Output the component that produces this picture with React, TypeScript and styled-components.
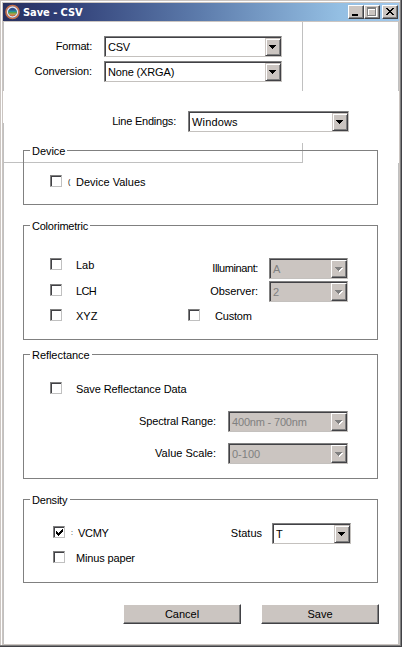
import React from "react";
import styled, { createGlobalStyle, css } from "styled-components";

const face = "#cbc5c1";
const dark = "#414145";
const mid = "#808080";
const line = "#c0c0c0";

const Global = createGlobalStyle`
  * { box-sizing: border-box; }
  html, body { margin: 0; padding: 0; background: #fff; }
  body {
    font-family: "Liberation Sans", Arial, sans-serif;
    font-size: 11px;
    line-height: 12px;
    color: #000;
    overflow: hidden;
  }
`;

const Frame = styled.div`
  width: 402px;
  height: 647px;
  background: ${face};
  padding: 1px 2px 2px 1px;
  box-shadow: inset -1px -1px 0 ${dark}, inset -2px -2px 0 ${mid};
`;

const FrameInner = styled.div`
  height: 100%;
  padding: 1px 1px 2px 1px;
  border-top: 1px solid #fff;
  border-left: 1px solid #fff;
`;

const TitleBar = styled.header`
  display: flex;
  align-items: center;
  height: 18px;
  padding: 0 1px 0 2px;
  background: linear-gradient(to right, #28315f 0, #2f3d75 14%, #5d7cac 50%, #94bfe3 85%, #a0c8ec 100%);
`;

const Title = styled.h1`
  flex: 1;
  margin: 2px 0 0 3px;
  font: bold 11px/14px "DejaVu Sans Condensed", "DejaVu Sans", sans-serif;
  font-stretch: condensed;
  letter-spacing: -0.05px;
  color: #fff;
  white-space: nowrap;
`;

const TitleButton = styled.button<{ $gap?: number }>`
  width: 16px;
  height: 14px;
  margin: 0 0 0 ${(p) => p.$gap ?? 0}px;
  padding: 0;
  border: 1px solid;
  border-color: #fff ${dark} ${dark} #fff;
  box-shadow: inset -1px -1px 0 ${mid};
  background: ${face};
  svg { display: block; }
`;

const Body = styled.main`
  position: relative;
  height: 622px;
  margin-top: 1px;
  padding-top: 14px;
  background: #fff;
`;

/* Thin pane edges that run beneath the groups */
const Edge = styled.i<{ $x: number; $y: number; $w?: number; $h?: number }>`
  position: absolute;
  left: ${(p) => p.$x}px;
  top: ${(p) => p.$y}px;
  width: ${(p) => p.$w ?? 1}px;
  height: ${(p) => p.$h ?? 1}px;
  background: ${line};
`;

const Field = styled.label<{ $width: number; $top?: number; $gap?: number }>`
  position: relative;
  display: flex;
  justify-content: flex-end;
  gap: ${(p) => p.$gap ?? 12}px;
  width: ${(p) => p.$width}px;
  margin-top: ${(p) => p.$top ?? 0}px;
`;

const Text = styled.span<{ $spacing?: number }>`
  white-space: nowrap;
  letter-spacing: ${(p) => p.$spacing ?? 0}px;
`;

const FieldText = styled(Text)`
  padding-top: 4px;
`;

const Combo = styled.span<{ $width: number; $disabled?: boolean }>`
  display: flex;
  justify-content: space-between;
  flex: none;
  width: ${(p) => p.$width}px;
  height: 21px;
  border: 1px solid;
  border-color: ${mid} #c4c1be #c4c1be ${mid};
  box-shadow: inset 1px 1px 0 ${dark};
  padding: 1px 0 0 3px;
  background: #fff;
  ${(p) =>
    p.$disabled &&
    css`
      background: ${face};
      color: ${mid};
    `}
`;

const ComboText = styled(Text)`
  padding-top: 3px;
`;

const Arrow = styled.span<{ $disabled?: boolean }>`
  width: 16px;
  height: 18px;
  border: 1px solid;
  border-color: ${face} ${dark} ${dark} ${face};
  box-shadow: inset 1px 1px 0 #fff, inset -1px -1px 0 ${mid};
  background: ${face};
  ${(p) =>
    p.$disabled &&
    css`
      border-color: #fff ${dark} ${dark} #fff;
      box-shadow: inset -1px -1px 0 ${mid};
    `}
  svg { display: block; }
`;

const Group = styled.section<{ $height: number; $top: number }>`
  position: relative;
  width: 355px;
  height: ${(p) => p.$height}px;
  margin: ${(p) => p.$top}px 0 0 20px;
  border: 1px solid ${mid};
`;

const Legend = styled.h2<{ $spacing?: number; $width: number }>`
  width: ${(p) => p.$width}px;
  height: 12px;
  margin: -6px 0 0 6px;
  padding-left: 2px;
  font: inherit;
  background: #fff;
  white-space: nowrap;
  letter-spacing: ${(p) => p.$spacing ?? 0}px;
`;

const GroupBody = styled.div<{ $top: number; $left?: number }>`
  display: flex;
  padding: ${(p) => p.$top}px 0 0 ${(p) => p.$left ?? 26}px;
`;

const Column = styled.div<{ $width: number }>`
  width: ${(p) => p.$width}px;
  flex: none;
`;

const CheckRow = styled.label<{ $top?: number }>`
  display: flex;
  height: 12px;
  margin-top: ${(p) => p.$top ?? 0}px;
`;

const CheckBox = styled.span`
  width: 12px;
  height: 12px;
  flex: none;
  border: 1px solid;
  border-color: ${mid} ${line} ${line} ${mid};
  box-shadow: inset 1px 1px 0 ${dark};
  background: #fff;
  svg { display: block; }
`;

const Remnant = styled.span<{ $width: number }>`
  width: ${(p) => p.$width}px;
  flex: none;
  padding-left: 6px;
`;

const Sliver = styled.span`
  display: block;
  font-size: 7px;
  line-height: 13px;
`;

const CheckText = styled(Text)`
  padding-top: 1px;
`;

const Buttons = styled.footer`
  display: flex;
  gap: 20px;
  margin: 21px 0 0 120px;
`;

const PushButton = styled.button`
  width: 118px;
  height: 20px;
  padding: 0 0 1px;
  border: 1px solid;
  border-color: #fff ${dark} ${dark} #fff;
  box-shadow: inset -1px -1px 0 ${mid};
  background: ${face};
  font: 11px/12px "Liberation Sans", Arial, sans-serif;
  color: #000;
`;

function Select({ value, width, disabled, spacing }: { value: string; width: number; disabled?: boolean; spacing?: number }) {
  return (
    <Combo $width={width} $disabled={disabled}>
      <ComboText $spacing={spacing}>{value}</ComboText>
      <Arrow $disabled={disabled}>
        <svg width="14" height="16" shapeRendering="crispEdges">
          {disabled && <path d="M4 7h7v1h-1v1h-1v1h-1v1h-1v-1h-1v-1h-1v-1h-1z" fill="#fff" />}
          <path d="M3 6h7v1h-1v1h-1v1h-1v1h-1v-1h-1v-1h-1v-1h-1z" fill={disabled ? mid : "#000"} />
        </svg>
      </Arrow>
    </Combo>
  );
}

function Check({ label, top, checked, spacing, remnant, gap = 14 }: {
  label: string; top?: number; checked?: boolean; spacing?: number; remnant?: string; gap?: number;
}) {
  return (
    <CheckRow $top={top}>
      <CheckBox>
        {checked && (
          <svg width="10" height="10" shapeRendering="crispEdges">
            <path d="M2 4h1v1h1v1h1v-1h1v-1h1v-1h1v-1h1v3h-1v1h-1v1h-1v1h-1v1h-1v-1h-1v-1h-1z" />
          </svg>
        )}
      </CheckBox>
      <Remnant $width={gap}>{remnant && <Sliver>{remnant}</Sliver>}</Remnant>
      <CheckText $spacing={spacing}>{label}</CheckText>
    </CheckRow>
  );
}

function AppIcon() {
  return (
    <svg width="15" height="16" viewBox="0 0 15 16">
      <circle cx="7.5" cy="8" r="6.500" fill="none" stroke="#c9714a" strokeWidth="1.600" />
      <circle cx="7.5" cy="8" r="5.700" fill="#e6e6ee" />
      <circle cx="7.5" cy="8" r="4.300" fill="#30508f" />
      <path d="M3.400 6.500h8.200l.2 1.500H3.200z" fill="#27949a" />
      <path d="M3.200 8h8.600l-.3 1.400H3.500z" fill="#55a34c" />
      <path d="M3.500 9.400h8l-.8 1.400H4.300z" fill="#e5c33b" />
      <path d="M4.300 10.800h6.400a4.300 4.300 0 0 1-6.400 0z" fill="#d86b3c" />
    </svg>
  );
}

export default function App() {
  return (
    <>
      <Global />
      <Frame>
        <FrameInner>
          <TitleBar>
            <AppIcon />
            <Title>Save - CSV</Title>
            <TitleButton aria-label="Minimize">
              <svg width="14" height="12" shapeRendering="crispEdges"><path d="M3 8h6v2H3z" /></svg>
            </TitleButton>
            <TitleButton aria-label="Maximize">
              <svg width="14" height="12" shapeRendering="crispEdges">
                <path d="M3.500 2.500h8v8h-8zM3 3.500h9" fill="none" stroke="#fff" />
                <path d="M2.500 1.500h8v8h-8zM2 2.500h9" fill="none" stroke={mid} />
              </svg>
            </TitleButton>
            <TitleButton aria-label="Close" $gap={2}>
              <svg width="14" height="12" shapeRendering="crispEdges">
                <path d="M3 2h2v1h1v1h2V3h1V2h2v1h-1v1H9v1H8v1h1v1h1v1h1v1H9V8H8V7H6v1H5v1H3V8h1V7h1V6h1V5H5V4H4V3H3z" />
              </svg>
            </TitleButton>
          </TitleBar>
          <Body>
            <Edge $x={0} $y={0} $h={69} />
            <Edge $x={0} $y={101} $h={521} />
            <Edge $x={299} $y={0} $h={69} />
            <Edge $x={299} $y={121} $h={20} />
            <Edge $x={0} $y={140} $w={300} />
            <Edge $x={395} $y={0} $h={69} />
            <Edge $x={395} $y={141} $h={481} />

            <Field $width={279}>
              <FieldText $spacing={-0.25}>Format:</FieldText>
              <Select value="CSV" width={178} spacing={-0.3} />
            </Field>
            <Field $width={279} $top={4}>
              <FieldText $spacing={-0.12}>Conversion:</FieldText>
              <Select value="None (XRGA)" width={178} spacing={-0.15} />
            </Field>
            <Field $width={346} $top={29}>
              <FieldText $spacing={-0.22}>Line Endings:</FieldText>
              <Select value="Windows" width={161} spacing={0.15} />
            </Field>

            <Group $top={18} $height={55}>
              <Legend $width={37} $spacing={-0.05}>Device</Legend>
              <GroupBody $top={18}>
                <Check label="Device Values" remnant="(" />
              </GroupBody>
            </Group>

            <Group $top={20} $height={115}>
              <Legend $width={60} $spacing={-0.22}>Colorimetric</Legend>
              <GroupBody $top={26}>
                <Column $width={138}>
                  <Check label="Lab" />
                  <Check label="LCH" top={14} spacing={-0.6} />
                  <Check label="XYZ" top={13} />
                </Column>
                <Column $width={160}>
                  <Field $width={160} $gap={11}>
                    <FieldText $spacing={-0.4}>Illuminant:</FieldText>
                    <Select value="A" width={79} disabled />
                  </Field>
                  <Field $width={160} $gap={11} $top={2}>
                    <FieldText $spacing={-0.05}>Observer:</FieldText>
                    <Select value="2" width={79} disabled />
                  </Field>
                  <Check label="Custom" top={7} gap={15} spacing={-0.2} />
                </Column>
              </GroupBody>
            </Group>

            <Group $top={14} $height={125}>
              <Legend $width={62} $spacing={-0.05}>Reflectance</Legend>
              <GroupBody $top={21}>
                <Column $width={298}>
                  <Check label="Save Reflectance Data" spacing={-0.09} />
                  <Field $width={298} $top={17}>
                    <FieldText $spacing={-0.13}>Spectral Range:</FieldText>
                    <Select value="400nm - 700nm" width={120} disabled spacing={-0.18} />
                  </Field>
                  <Field $width={298} $top={11}>
                    <FieldText>Value Scale:</FieldText>
                    <Select value="0-100" width={120} disabled />
                  </Field>
                </Column>
              </GroupBody>
            </Group>

            <Group $top={20} $height={84}>
              <Legend $width={40} $spacing={-0.2}>Density</Legend>
              <GroupBody $top={17} $left={29}>
                <Column $width={158}>
                  <Check label="VCMY" top={3} checked gap={13} remnant=":" spacing={-0.3} />
                  <Check label="Minus paper" top={13} gap={11} spacing={-0.15} />
                </Column>
                <Field $width={140} $gap={10}>
                  <FieldText>Status</FieldText>
                  <Select value="T" width={79} />
                </Field>
              </GroupBody>
            </Group>

            <Buttons>
              <PushButton>Cancel</PushButton>
              <PushButton>Save</PushButton>
            </Buttons>
          </Body>
        </FrameInner>
      </Frame>
    </>
  );
}
